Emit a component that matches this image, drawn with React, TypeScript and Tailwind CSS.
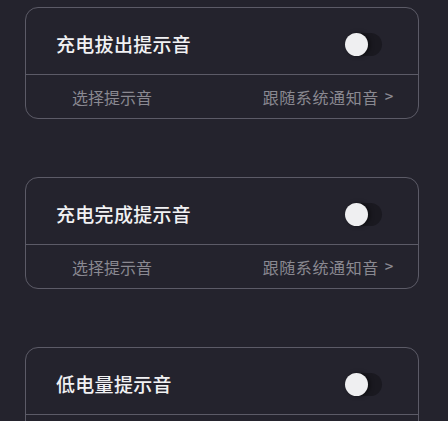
interface SoundCardProps {
  title: string;
}

function Toggle() {
  return (
    <div className="relative w-[37px] h-[23px] rounded-full bg-[#1a1920]">
      <div className="absolute left-0 top-0 w-[23px] h-[23px] rounded-full bg-[#efeff1] shadow-[2px_0_4px_rgba(0,0,0,0.5)]" />
    </div>
  );
}

function SoundCard({ title }: SoundCardProps) {
  return (
    <div className="ml-[25px] w-[394px] shrink-0 rounded-[13px] border border-[#5c5b67] overflow-hidden">
      <div className="h-[67px] flex items-center justify-between pt-[7px] pl-[30px] pr-[36px] border-b border-[#5c5b67]">
        <span className="text-[19px] font-medium text-[#f1f1f3] tracking-[0.3px]">{title}</span>
        <Toggle />
      </div>
      <div className="h-[43px] flex items-center justify-between pl-[46px] pr-[24px] text-[16px] text-[#8a8991]">
        <span>选择提示音</span>
        <span className="flex items-center gap-[6px] tracking-[0.6px]">
          跟随系统通知音
          <span className="text-[15px] font-medium">&gt;</span>
        </span>
      </div>
    </div>
  );
}

export default function App() {
  return (
    <div
      className="w-[448px] h-[421px] overflow-hidden bg-[#24232d] flex flex-col gap-[58px] pt-[7px]"
      style={{ fontFamily: '"Noto Sans CJK SC", "Noto Sans", sans-serif' }}
    >
      <SoundCard title="充电拔出提示音" />
      <SoundCard title="充电完成提示音" />
      <SoundCard title="低电量提示音" />
    </div>
  );
}
